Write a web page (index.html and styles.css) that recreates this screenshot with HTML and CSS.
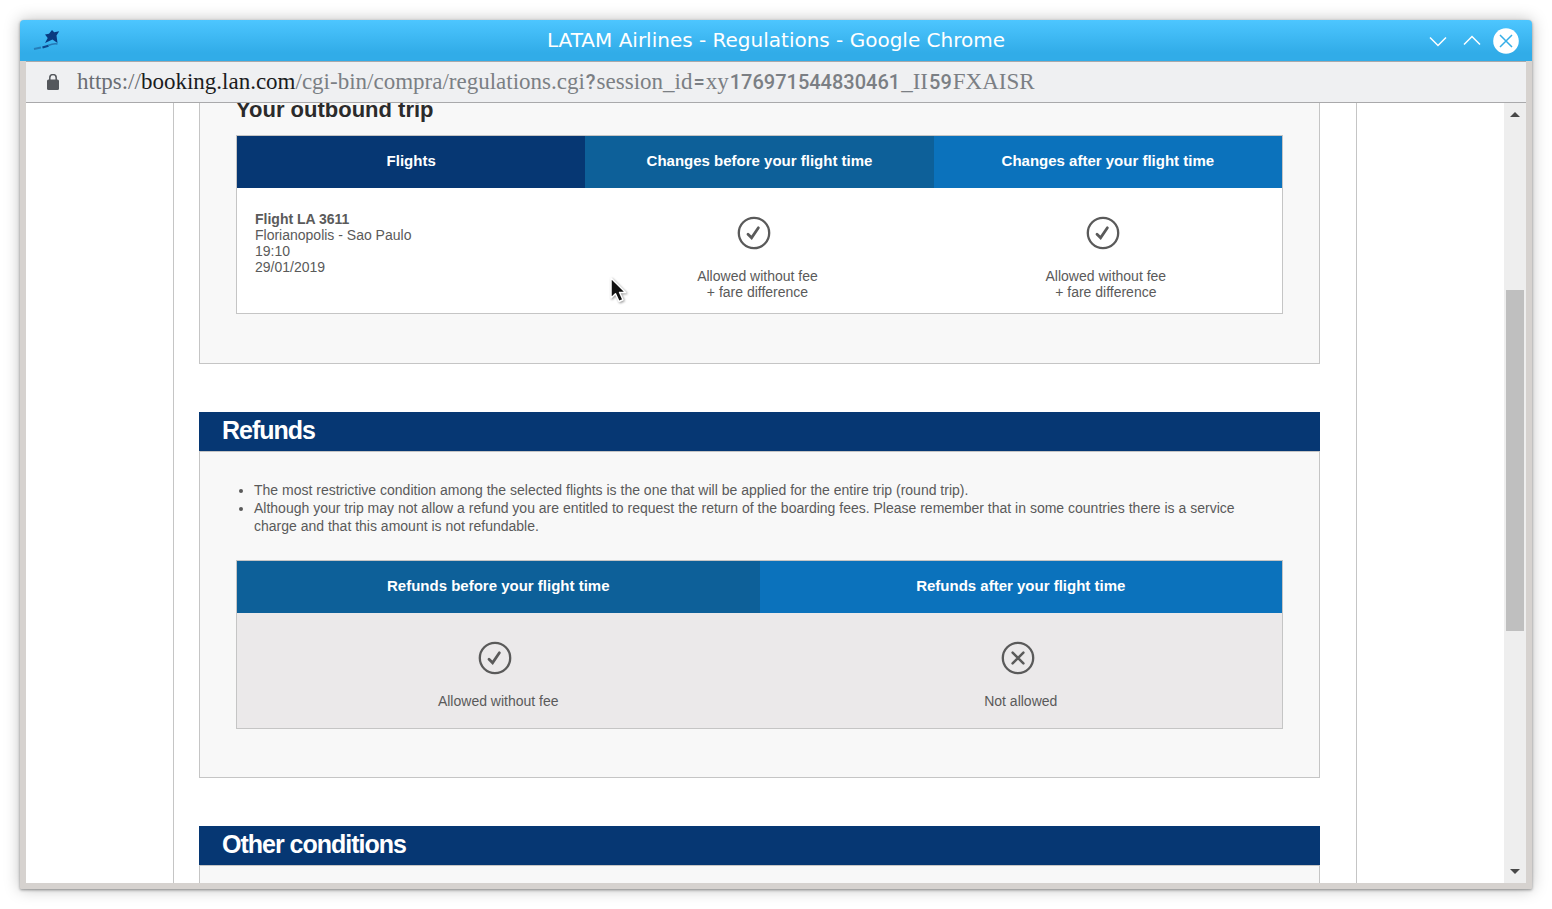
FILE: index.html
```html
<!DOCTYPE html>
<html lang="en">
<head>
  <meta charset="UTF-8">
  <meta name="viewport" content="width=device-width, initial-scale=1.0">
  <title>LATAM Airlines - Regulations</title>
  <link rel="stylesheet" href="styles.css">
</head>
<body>
  <svg class="symbols" width="0" height="0" aria-hidden="true">
    <symbol id="icon-yes" viewBox="0 0 34 34">
      <circle cx="17" cy="17" r="15.2" fill="none" stroke="currentColor" stroke-width="2.3"/>
      <path d="M11 18.200l3.600 3.600 6.800-10" fill="none" stroke="currentColor" stroke-width="2.8" stroke-linecap="round"/>
    </symbol>
    <symbol id="icon-no" viewBox="0 0 34 34">
      <circle cx="17" cy="17" r="15.2" fill="none" stroke="currentColor" stroke-width="2.3"/>
      <path d="M11.6 11.6l10.8 10.8M22.4 11.6L11.6 22.4" fill="none" stroke="currentColor" stroke-width="2.5" stroke-linecap="round"/>
    </symbol>
  </svg>

  <div class="window">
    <header class="titlebar">
      <svg class="app-icon" width="30" height="24" viewBox="0 0 30 24">
        <path d="M17 3l2.200 2.200 5-1-2.700 4.300 1 7.500-5-3.500-7.500 3.500 2.700-5-2.700-3.500 4-.8z" fill="#0a3a80"/>
        <path d="M-1 22l7-1.500" stroke="#2272ad" stroke-width="2" opacity=".8"/>
        <path d="M7.500 20.500l6-1.800" stroke="#0d468c" stroke-width="2.200"/>
        <path d="M13 18.500q6-2.500 9.500-1.500" fill="none" stroke="#2577b3" stroke-width="1.500"/>
      </svg>
      <div class="window-title">LATAM Airlines - Regulations - Google Chrome</div>
      <div class="window-buttons">
        <button type="button" aria-label="Minimize">
          <svg width="26" height="26" viewBox="0 0 26 26"><path d="M5 9.500l8 8 8-8" fill="none" stroke="#fff" stroke-width="1.500"/></svg>
        </button>
        <button type="button" aria-label="Maximize">
          <svg width="26" height="26" viewBox="0 0 26 26"><path d="M5 16.500l8-8 8 8" fill="none" stroke="#fff" stroke-width="1.500"/></svg>
        </button>
        <button type="button" aria-label="Close">
          <svg width="26" height="26" viewBox="0 0 26 26"><circle cx="13" cy="13" r="12.800" fill="#fff"/><path d="M7 7l12 12M19 7L7 19" stroke="#35aee8" stroke-width="1.500"/></svg>
        </button>
      </div>
    </header>

    <div class="client">
      <div class="address">
        <svg class="lock" width="12" height="16" viewBox="0 0 12 16">
          <rect x="0" y="5.500" width="12" height="10.500" rx="1.500" fill="#54575c"/>
          <path d="M2.800 6V3.800a3.200 3.200 0 0 1 6.400 0V6" fill="none" stroke="#54575c" stroke-width="1.500"/>
        </svg>
        <div class="url"><span class="scheme">https://</span><span class="host">booking.lan.com</span>/cgi-bin/compra/regulations.cgi<span class="num">?</span>session_id<span class="num">=</span>xy<span class="num">176971544830461</span>_II<span class="num">59</span>FXAISR</div>
      </div>

      <div class="viewport">
        <main class="page">
          <section class="panel">
            <div class="panel-body panel-outbound">
              <h3>Your outbound trip</h3>
              <table class="conditions changes">
                <thead>
                  <tr>
                    <th class="dark">Flights</th>
                    <th class="medium">Changes before your flight time</th>
                    <th class="light">Changes after your flight time</th>
                  </tr>
                </thead>
                <tbody>
                  <tr>
                    <td class="flight"><strong>Flight LA 3611</strong><br>Florianopolis - Sao Paulo<br>19:10<br>29/01/2019</td>
                    <td><svg class="icon"><use href="#icon-yes"/></svg>Allowed without fee<br>+ fare difference</td>
                    <td><svg class="icon"><use href="#icon-yes"/></svg>Allowed without fee<br>+ fare difference</td>
                  </tr>
                </tbody>
              </table>
            </div>
          </section>

          <section class="panel">
            <h2>Refunds</h2>
            <div class="panel-body">
              <ul>
                <li>The most restrictive condition among the selected flights is the one that will be applied for the entire trip (round trip).</li>
                <li>Although your trip may not allow a refund you are entitled to request the return of the boarding fees. Please remember that in some countries there is a service charge and that this amount is not refundable.</li>
              </ul>
              <table class="conditions refunds">
                <thead>
                  <tr>
                    <th class="medium">Refunds before your flight time</th>
                    <th class="light">Refunds after your flight time</th>
                  </tr>
                </thead>
                <tbody>
                  <tr>
                    <td><svg class="icon"><use href="#icon-yes"/></svg>Allowed without fee</td>
                    <td><svg class="icon"><use href="#icon-no"/></svg>Not allowed</td>
                  </tr>
                </tbody>
              </table>
            </div>
          </section>

          <section class="panel">
            <h2>Other conditions</h2>
            <div class="panel-body"></div>
          </section>
        </main>

        <div class="scrollbar">
          <button type="button" aria-label="Scroll up"><svg width="10" height="5" viewBox="0 0 10 5"><path d="M0 5l5-5 5 5z" fill="#484848"/></svg></button>
          <div class="track-above"></div>
          <div class="thumb"></div>
          <div class="track-below"></div>
          <button type="button" aria-label="Scroll down"><svg width="10" height="5" viewBox="0 0 10 5"><path d="M0 0l5 5 5-5z" fill="#484848"/></svg></button>
        </div>
      </div>
    </div>

    <svg class="cursor" width="20" height="30" viewBox="0 0 20 30">
      <path d="M2 2v20l4.500-4.200 3.500 7.700 4-1.800-3.400-7.200h6z" fill="#111" stroke="#fff" stroke-width="1.500" stroke-linejoin="round"/>
    </svg>
  </div>
</body>
</html>
```
FILE: styles.css
```css
* {
  box-sizing: border-box;
}

body {
  height: 100vh;
  margin: 0;
  padding: 20px;
  background: #fff;
  color: #5a5a5a;
  font: 14px/16px "Liberation Sans", Arial, sans-serif;
  overflow: hidden;
}

button {
  padding: 0;
  border: 0;
  background: none;
}

.symbols {
  position: absolute;
}

.window {
  position: relative;
  display: flex;
  flex-direction: column;
  height: 100%;
  border-radius: 4px 4px 1px 1px;
  background: #d6d2cf;
  box-shadow: 0 1px 3px rgba(0, 0, 0, .4), 0 0 16px rgba(0, 0, 0, .25);
}

/* title bar */
.titlebar {
  display: flex;
  align-items: center;
  flex: none;
  height: 41px;
  padding: 0 13px;
  border-radius: 4px 4px 0 0;
  background: linear-gradient(#4dc6ff, #31ace8 80%);
}

.app-icon {
  margin: 0 62px 4px 2px;
  overflow: visible;
}

.window-title {
  flex: 1;
  padding-bottom: 2px;
  color: #fff;
  font: 20px/24px "DejaVu Sans", sans-serif;
  text-align: center;
}

.window-buttons {
  display: flex;
  gap: 8px;
}

.window-buttons button {
  width: 26px;
  height: 26px;
}

.window-buttons svg {
  display: block;
}

.client {
  display: flex;
  flex: 1;
  flex-direction: column;
  min-height: 0;
  margin: 0 6px 6px;
}

/* address bar */
.address {
  display: flex;
  align-items: center;
  flex: none;
  gap: 18px;
  height: 42px;
  padding: 0 21px;
  border-top: 1px solid #a9a9ab;
  border-bottom: 1px solid #a9a9ab;
  background: #eff0f2;
}

.url {
  color: #7b7f84;
  font: 23px/30px "Liberation Serif", serif;
  white-space: nowrap;
}

.url .scheme {
  color: #6a6d72;
}

.url .host {
  color: #1b1c1e;
}

.url .num {
  margin: 0 1px;
  font: 500 20px/30px Roboto, sans-serif;
}

/* document */
.viewport {
  display: flex;
  flex: 1;
  min-height: 0;
  background: #fff;
  overflow: hidden;
}

.page {
  flex: 1;
  max-width: 1184px;
  height: max-content;
  margin: 0 auto;
  padding: 0 36px 0 25px;
  border: solid #c5c5c5;
  border-width: 0 1px;
}

.panel {
  margin-bottom: 48px;
}

.panel h2 {
  margin: 0;
  padding: 0 23px 2px;
  background: #063773;
  color: #fff;
  font-size: 25px;
  line-height: 37px;
  letter-spacing: -1px;
}

.panel-body {
  min-height: 60px;
  padding: 29px 36px 48px;
  border: 1px solid #c5c5c5;
  background: #f8f8f8;
}

.panel-outbound {
  margin-top: -5px;
  padding-top: 0;
  border-top: 0;
  padding-bottom: 49px;
}

h3 {
  margin: 0 0 13px;
  color: #2b2b2b;
  font-size: 22px;
  line-height: 24px;
}

ul {
  margin: 0 0 25px;
  padding: 0 12px 0 18px;
  line-height: 18px;
}

.conditions {
  width: 100%;
  border: 1px solid #c5c5c5;
  border-spacing: 0;
  background: #fff;
  table-layout: fixed;
  text-align: center;
}

.conditions th {
  height: 52px;
  padding: 0 0 2px;
  color: #fff;
  font-size: 15px;
}

.conditions td {
  padding: 28px 18px 13px;
  vertical-align: top;
}

.changes td {
  padding-right: 22px;
}

.conditions .flight {
  padding-top: 23px;
  text-align: left;
}

.conditions .icon {
  display: block;
  width: 40px;
  height: 34px;
  margin: 0 auto 18px;
  padding-right: 6px;
}

.conditions.refunds td {
  padding-bottom: 19px;
  background: #ebe9ea;
}

.dark {
  background: #063773;
}

.medium {
  background: #0d6099;
}

.light {
  background: #0b72bc;
}

/* scroll bar */
.scrollbar {
  display: flex;
  flex: none;
  flex-direction: column;
  width: 22px;
  padding: 0 2px;
  background: #eee;
}

.scrollbar button {
  flex: none;
  height: 23px;
}

.scrollbar svg {
  display: block;
  margin: 0 auto;
}

.track-above {
  flex: 164;
}

.thumb {
  flex: 341;
  background: #bfbfbf;
}

.track-below {
  flex: 229;
}

.cursor {
  position: absolute;
  top: 256px;
  left: 589px;
  filter: drop-shadow(1px 1px 1px rgba(0, 0, 0, .4));
}
```
